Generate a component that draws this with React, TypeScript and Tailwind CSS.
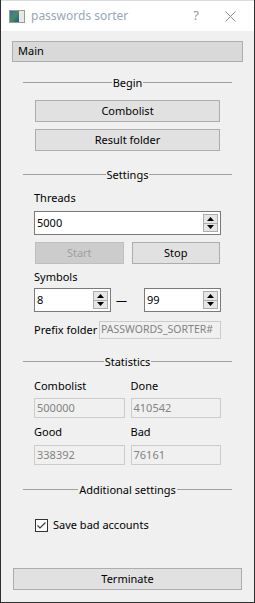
import { useState } from 'react';

const font = { fontFamily: '"Noto Sans", "Liberation Sans", sans-serif' };

function Header({ title, className = '' }: { title: string; className?: string }) {
    return (
        <div className={`flex items-center h-[14px] mx-[22px] ${className}`}>
            <div className="flex-1 h-px bg-[#a0a0a0]" />
            <span className="px-[1px] leading-none">{title}</span>
            <div className="flex-1 h-px bg-[#a0a0a0]" />
        </div>
    );
}

function Btn({ label, disabled = false, className = '' }: { label: string; disabled?: boolean; className?: string }) {
    return (
        <div
            className={`flex items-center justify-center h-[22px] border ${
                disabled ? 'bg-[#cccccc] border-[#bfbfbf] text-[#a0a0a0]' : 'bg-[#e1e1e1] border-[#adadad] text-black'
            } ${className}`}
        >
            {label}
        </div>
    );
}

function Spin({ value, className = '' }: { value: string; className?: string }) {
    return (
        <div className={`flex items-center h-[24px] bg-white border border-[#7a7a7a] pl-[2px] pr-[2px] ${className}`}>
            <span className="flex-1">{value}</span>
            <div className="flex flex-col w-[15px] h-[18px] border border-[#adadad] bg-[#e6e6e6]">
                <div className="flex-1 flex items-center justify-center border-b border-[#adadad]">
                    <svg width="7" height="4" viewBox="0 0 7 4"><path d="M3.5 0L7 4H0z" fill="#000" /></svg>
                </div>
                <div className="flex-1 flex items-center justify-center">
                    <svg width="7" height="4" viewBox="0 0 7 4"><path d="M0 0h7L3.5 4z" fill="#000" /></svg>
                </div>
            </div>
        </div>
    );
}

function Field({ value, className = '' }: { value: string; className?: string }) {
    return (
        <div className={`flex items-center h-[20px] border border-[#cccccc] text-[#838383] pl-[2px] ${className}`}>
            {value}
        </div>
    );
}

export default function App() {
    const [saveBad, setSaveBad] = useState(true);

    return (
        <div className="w-[255px] h-[603px] flex flex-col bg-[#f0f0f0] border-x border-b border-[#2e2e2e] text-[11px] text-black overflow-hidden" style={font}>
            {/* title bar */}
            <div className="flex items-center h-[31px] bg-white border-t border-[#dcdcdc] shrink-0">
                <div className="ml-[8px] w-[16px] h-[13px] flex border border-[#9a9a9a] bg-[#e8e8e8]">
                    <div className="w-[9px] h-full bg-gradient-to-br from-[#2f6fb5] via-[#4c8c5a] to-[#2d4f8a]" />
                </div>
                <span className="ml-[6px] text-[#9aa7b3] text-[12px]">passwords sorter</span>
                <span className="ml-auto mr-[26px] text-[#9a9a9a] text-[13px]">?</span>
                <svg className="mr-[18px]" width="11" height="11" viewBox="0 0 11 11">
                    <path d="M0.5 0.5L10.5 10.5M10.5 0.5L0.5 10.5" stroke="#8f8f8f" strokeWidth="1" />
                </svg>
            </div>

            {/* tab */}
            <div className="mt-[10px] mx-[11px] h-[21px] flex items-center pl-[5px] bg-[#d9d9d9] border border-[#adadad]">
                Main
            </div>

            <Header title="Begin" className="mt-[13px]" />
            <div className="mx-[34px] flex flex-col gap-[7px] mt-[11px]">
                <Btn label="Combolist" />
                <Btn label="Result folder" />
            </div>

            <Header title="Settings" className="mt-[16px]" />
            <div className="mx-[33px] flex flex-col">
                <div className="mt-[10px] h-[14px] flex items-center">Threads</div>
                <Spin value="5000" className="mt-[6px]" />
                <div className="mt-[7px] flex gap-[8px] pl-[1px] pr-[1px]">
                    <Btn label="Start" disabled className="flex-1" />
                    <Btn label="Stop" className="flex-1" />
                </div>
                <div className="mt-[6px] h-[14px] flex items-center">Symbols</div>
                <div className="mt-[4px] flex items-center">
                    <Spin value="8" className="w-[77px]" />
                    <span className="flex-1 text-center pr-[12px]">—</span>
                    <Spin value="99" className="w-[77px]" />
                </div>
                <div className="mt-[9px] flex items-center">
                    <span className="w-[65px] shrink-0 whitespace-nowrap">Prefix folder</span>
                    <div className="flex-1 min-w-0 h-[18px] flex items-center border border-[#cccccc] text-[#838383] pl-[1px] whitespace-nowrap overflow-hidden text-[10.5px]">
                        PASSWORDS_SORTER#
                    </div>
                </div>
            </div>

            <Header title="Statistics" className="mt-[15px]" />
            <div className="mx-[33px] grid grid-cols-2 gap-x-[6px]">
                <div className="mt-[11px] h-[14px] flex items-center">Combolist</div>
                <div className="mt-[11px] h-[14px] flex items-center">Done</div>
                <Field value="500000" className="mt-[5px]" />
                <Field value="410542" className="mt-[5px]" />
                <div className="mt-[7px] h-[14px] flex items-center">Good</div>
                <div className="mt-[7px] h-[14px] flex items-center">Bad</div>
                <Field value="338392" className="mt-[6px]" />
                <Field value="76161" className="mt-[6px]" />
            </div>

            <Header title="Additional settings" className="mt-[17px]" />
            <label className="mt-[21px] mx-[34px] flex items-center gap-[5px] cursor-pointer">
                <input type="checkbox" className="hidden" checked={saveBad} onChange={e => setSaveBad(e.target.checked)} />
                <span className="w-[13px] h-[13px] border border-[#333333] bg-white flex items-center justify-center">
                    {saveBad && (
                        <svg width="11" height="11" viewBox="0 0 11 11">
                            <path d="M1.5 5.5L4 8L9.5 2.5" stroke="#333" strokeWidth="1.1" fill="none" />
                        </svg>
                    )}
                </span>
                <span>Save bad accounts</span>
            </label>

            <div className="mt-auto mb-[12px] mx-[12px]">
                <Btn label="Terminate" />
            </div>
        </div>
    );
}
